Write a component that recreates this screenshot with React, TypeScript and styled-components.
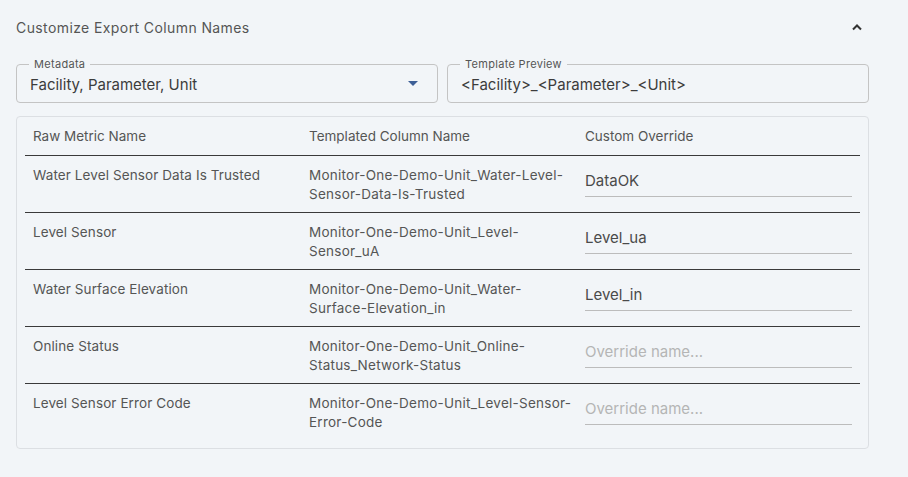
import styled, { createGlobalStyle } from "styled-components";

const GlobalStyle = createGlobalStyle`
  html, body {
    margin: 0;
    padding: 0;
    background: #f2f5f8;
  }
  body {
    font-family: Inter, "Noto Sans", sans-serif;
    color: #555;
  }
`;

type Row = {
  raw: string;
  templated: string;
  override: string;
};

const rows: Row[] = [
  {
    raw: "Water Level Sensor Data Is Trusted",
    templated: "Monitor-One-Demo-Unit_Water-Level-Sensor-Data-Is-Trusted",
    override: "DataOK",
  },
  {
    raw: "Level Sensor",
    templated: "Monitor-One-Demo-Unit_Level-Sensor_uA",
    override: "Level_ua",
  },
  {
    raw: "Water Surface Elevation",
    templated: "Monitor-One-Demo-Unit_Water-Surface-Elevation_in",
    override: "Level_in",
  },
  {
    raw: "Online Status",
    templated: "Monitor-One-Demo-Unit_Online-Status_Network-Status",
    override: "",
  },
  {
    raw: "Level Sensor Error Code",
    templated: "Monitor-One-Demo-Unit_Level-Sensor-Error-Code",
    override: "",
  },
];

export default function App() {
  return (
    <>
      <GlobalStyle />
      <Panel>
        <Header>
          <Title>Customize Export Column Names</Title>
          <ChevronButton aria-label="Collapse">
            <svg width="12" height="8" viewBox="0 0 12 8">
              <path d="M2 6.5 L6 2.5 L10 6.5" fill="none" stroke="#333" strokeWidth="2" />
            </svg>
          </ChevronButton>
        </Header>

        <FieldRow>
          <Field>
            <Legend>Metadata</Legend>
            <FieldValue>Facility, Parameter, Unit</FieldValue>
            <DropArrow viewBox="0 0 10 5" width="10" height="5">
              <path d="M0 0 L10 0 L5 5 Z" fill="#3d5f96" />
            </DropArrow>
          </Field>
          <Field>
            <Legend>Template Preview</Legend>
            <FieldValue>&lt;Facility&gt;_&lt;Parameter&gt;_&lt;Unit&gt;</FieldValue>
          </Field>
        </FieldRow>

        <TableCard>
          <Table>
            <colgroup>
              <col style={{ width: 276 }} />
              <col style={{ width: 276 }} />
              <col />
            </colgroup>
            <thead>
              <tr>
                <HeadCell>Raw Metric Name</HeadCell>
                <HeadCell>Templated Column Name</HeadCell>
                <HeadCell>Custom Override</HeadCell>
              </tr>
            </thead>
            <tbody>
              {rows.map((r, i) => (
                <BodyRow key={r.raw} $last={i === rows.length - 1}>
                  <Cell $spacing={0.1}>{r.raw}</Cell>
                  <Cell $spacing={0.25}>{r.templated}</Cell>
                  <InputCell>
                    <OverrideInput defaultValue={r.override} placeholder="Override name..." />
                  </InputCell>
                </BodyRow>
              ))}
            </tbody>
          </Table>
        </TableCard>
      </Panel>
    </>
  );
}

const Panel = styled.div`
  width: 853px;
  padding: 0 16px;
  display: flex;
  flex-direction: column;
`;

const Header = styled.div`
  height: 54px;
  display: flex;
  align-items: center;
  justify-content: space-between;
`;

const Title = styled.div`
  font-size: 14px;
  color: #555;
  letter-spacing: 0.4px;
`;

const ChevronButton = styled.div`
  width: 24px;
  height: 24px;
  margin-right: 0;
  display: flex;
  align-items: center;
  justify-content: center;
`;

const FieldRow = styled.div`
  margin-top: 10px;
  display: flex;
  gap: 9px;
`;

const Field = styled.div`
  position: relative;
  flex: 1;
  height: 39px;
  box-sizing: border-box;
  border: 1px solid #c4c4c4;
  border-radius: 4px;
  display: flex;
  align-items: center;
  padding: 2px 14px 0 13px;
`;

const Legend = styled.span`
  position: absolute;
  top: -7px;
  left: 12px;
  padding: 0 5px 0 5px;
  background: #f2f5f8;
  font-size: 11px;
  line-height: 13px;
  color: #555;
  letter-spacing: 0.3px;
`;

const FieldValue = styled.div`
  flex: 1;
  font-size: 15px;
  color: #3c3c3c;
`;

const DropArrow = styled.svg`
  margin-right: 5px;
  margin-top: -2px;
`;

const TableCard = styled.div`
  margin-top: 13px;
  border: 1px solid #dcdfe3;
  border-radius: 4px;
  padding: 0 8px 8px 8px;
`;

const Table = styled.table`
  width: 100%;
  border-collapse: collapse;
  table-layout: fixed;
`;

const HeadCell = styled.th`
  text-align: left;
  font-weight: 400;
  font-size: 13.5px;
  color: #555;
  height: 38px;
  padding: 0 2px 0 8px;
  border-bottom: 1px solid #3a3a3a;
`;

const BodyRow = styled.tr<{ $last: boolean }>`
  border-bottom: ${(p) => (p.$last ? "none" : "1px solid #3a3a3a")};
`;

const Cell = styled.td<{ $spacing: number }>`
  vertical-align: top;
  font-size: 13.5px;
  line-height: 19px;
  letter-spacing: ${(p) => p.$spacing}px;
  color: #555;
  padding: 10px 2px 8px 8px;
  height: 38px;
`;

const InputCell = styled.td`
  vertical-align: top;
  padding: 10px 8px 8px;
`;

const OverrideInput = styled.input`
  display: block;
  width: 100%;
  box-sizing: border-box;
  border: none;
  border-bottom: 1px solid #bcbcbc;
  background: transparent;
  font-family: Inter, "Noto Sans", sans-serif;
  font-size: 15px;
  color: #4a4a4a;
  padding: 5px 0 6px;
  outline: none;
  &::placeholder {
    color: #b5b5b5;
  }
`;
